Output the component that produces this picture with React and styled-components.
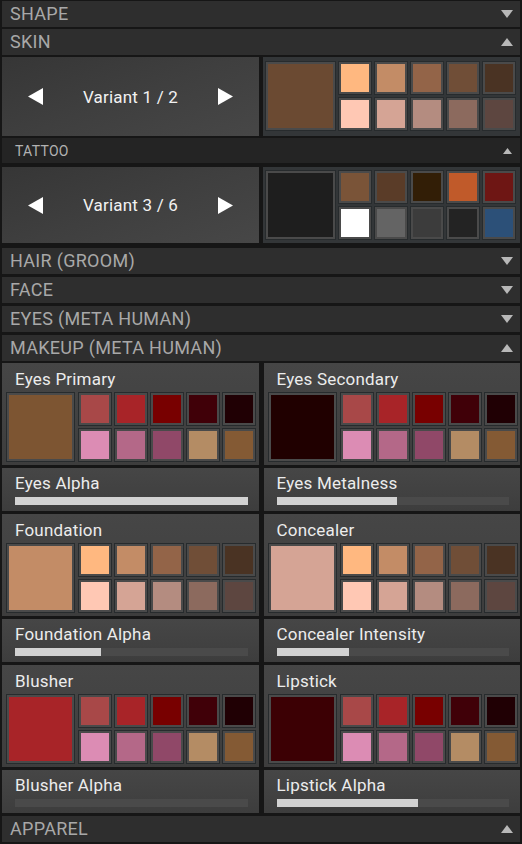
import React from "react";
import styled, { createGlobalStyle } from "styled-components";

const GlobalStyle = createGlobalStyle`
  html, body { margin: 0; padding: 0; background: #161616; }
  body { font-family: Roboto, "Liberation Sans", sans-serif; }
  * { box-sizing: border-box; }
`;

const Page = styled.div`
  width: 522px;
  height: 844px;
  padding: 1px 2px 0 2px;
  display: flex;
  flex-direction: column;
  background: #161616;
  overflow: hidden;
`;

const Group = styled.div`
  display: flex;
  flex-direction: column;
  gap: ${(p) => p.$gap}px;
  margin-top: ${(p) => p.$mt || 0}px;
`;

const HeaderBar = styled.div`
  height: ${(p) => (p.$small ? 25 : 26)}px;
  display: flex;
  align-items: center;
  justify-content: space-between;
  padding: 0 ${(p) => (p.$small ? 8 : 7)}px 0 ${(p) => (p.$small ? 13 : 8)}px;
  background: ${(p) => (p.$small ? "#242424" : "#2e2e2e")};
  color: ${(p) => (p.$small ? "#b2b2b2" : "#a8a8a8")};
  font-size: ${(p) => (p.$small ? 14 : 18)}px;
  letter-spacing: ${(p) => (p.$small ? 0.3 : 0.3)}px;
  line-height: 1;
`;

const Arrow = ({ up, small }) => {
  const w = small ? 9 : 12;
  const h = small ? 6 : 8;
  return (
    <svg width={w} height={h} viewBox={`0 0 ${w} ${h}`}>
      <polygon
        points={up ? `0,${h} ${w},${h} ${w / 2},0` : `0,0 ${w},0 ${w / 2},${h}`}
        fill="#b8b8b8"
      />
    </svg>
  );
};

const Header = ({ title, open, small }) => (
  <HeaderBar $small={small}>
    <span>{title}</span>
    <Arrow up={open} small={small} />
  </HeaderBar>
);

const VariantRow = styled.div`
  display: grid;
  grid-template-columns: minmax(0, 1fr) minmax(0, 1fr);
  gap: 4px;
  height: ${(p) => p.$h}px;
  margin: ${(p) => p.$m || "0"};
`;

const VariantPanel = styled.div`
  display: flex;
  align-items: center;
  justify-content: space-between;
  padding: 0 26px;
  background: linear-gradient(160deg, #363636 0%, #3f3f3f 50%, #474747 100%);
  color: #f2f2f2;
  font-size: 17px;
  letter-spacing: 0.2px;
`;

const Tri = ({ dir }) => (
  <svg width="15" height="17" viewBox="0 0 15 17">
    <polygon points={dir === "left" ? "15,0 15,17 0,8.5" : "0,0 0,17 15,8.5"} fill="#ffffff" />
  </svg>
);

const SwatchPanel = styled.div`
  background: #333638;
  padding: ${(p) => p.$pad};
  display: flex;
`;

const PaletteWrap = styled.div`
  display: flex;
  gap: ${(p) => p.$gap}px;
`;

const Swatch = styled.div`
  flex: none;
  width: ${(p) => p.$w}px;
  height: ${(p) => p.$hh}px;
  background: ${(p) => p.$c};
  border: 2px solid #4a4a4a;
  box-shadow: 0 0 0 1px #272b2d;
`;

const SmallGrid = styled.div`
  display: grid;
  grid-template-columns: repeat(5, 32px);
  grid-template-rows: repeat(2, 32px);
  gap: 4px;
`;

const Palette = ({ main, colors, bigW = 67, gap = 5 }) => (
  <PaletteWrap $gap={gap}>
    <Swatch $w={bigW} $hh={68} $c={main} />
    <SmallGrid>
      {colors.map((c, i) => (
        <Swatch key={i} $w={32} $hh={32} $c={c} />
      ))}
    </SmallGrid>
  </PaletteWrap>
);

const MakeupGrid = styled.div`
  display: grid;
  grid-template-columns: minmax(0, 1fr) minmax(0, 1fr);
  column-gap: 5px;
  row-gap: 3px;
  margin-top: 2px;
`;

const Card = styled.div`
  background: linear-gradient(180deg, #464646 0%, #414141 60%, #3d3d3d 100%);
  height: ${(p) => p.$h}px;
  padding: 4px 3px 0 5px;
  display: flex;
  flex-direction: column;
  min-width: 0;
`;

const CardTitle = styled.div`
  height: ${(p) => p.$h}px;
  display: flex;
  align-items: center;
  padding-left: 8px;
  color: #ececec;
  font-size: 17px;
  letter-spacing: 0.2px;
  margin-bottom: ${(p) => p.$mb}px;
`;

const Track = styled.div`
  margin: 0 8px 0 8px;
  height: 8px;
  background: #4a4a4a;
  display: flex;
`;

const Fill = styled.div`
  height: 100%;
  background: #d2d2d2;
`;

const skin = [
  "#ffb880", "#c38c66", "#936448", "#704e37", "#4a3323",
  "#ffc8b4", "#d5a495", "#b48c80", "#8c6a5e", "#5d4640",
];
const tattoo = [
  "#7a5438", "#5a3c28", "#321e06", "#c05a2a", "#6e1614",
  "#ffffff", "#646464", "#3c3c3c", "#232323", "#2c5078",
];
const makeup = [
  "#a84848", "#a82428", "#780000", "#400008", "#200004",
  "#dc8cb4", "#b46888", "#904868", "#b48c64", "#845a34",
];

const ColorCard = ({ title, main, colors }) => (
  <Card $h={102}>
    <CardTitle $h={24} $mb={2}>{title}</CardTitle>
    <Palette main={main} colors={colors} />
  </Card>
);

const SliderCard = ({ title, value }) => (
  <Card $h={43}>
    <CardTitle $h={22} $mb={3}>{title}</CardTitle>
    <Track>
      <Fill style={{ width: `${value * 100}%` }} />
    </Track>
  </Card>
);

export default function App() {
  return (
    <>
      <GlobalStyle />
      <Page>
        <Group $gap={2}>
          <Header title="SHAPE" />
          <Header title="SKIN" open />
          <VariantRow $h={79}>
            <VariantPanel>
              <Tri dir="left" />
              <span>Variant 1 / 2</span>
              <Tri dir="right" />
            </VariantPanel>
            <SwatchPanel $pad="5px 3px">
              <Palette main="#6b4a32" colors={skin} bigW={69} gap={4} />
            </SwatchPanel>
          </VariantRow>
          <Header title="TATTOO" open small />
        </Group>
        <VariantRow $h={76} $m="4px 0 0 0">
          <VariantPanel>
            <Tri dir="left" />
            <span>Variant 3 / 6</span>
            <Tri dir="right" />
          </VariantPanel>
          <SwatchPanel $pad="4px 3px">
            <Palette main="#1e1e1e" colors={tattoo} bigW={69} gap={4} />
          </SwatchPanel>
        </VariantRow>
        <Group $gap={3} $mt={5}>
          <Header title="HAIR (GROOM)" />
          <Header title="FACE" />
          <Header title="EYES (META HUMAN)" />
          <Header title="MAKEUP (META HUMAN)" open />
        </Group>
        <MakeupGrid>
          <ColorCard title="Eyes Primary" main="#7d5532" colors={makeup} />
          <ColorCard title="Eyes Secondary" main="#200000" colors={makeup} />
          <SliderCard title="Eyes Alpha" value={1} />
          <SliderCard title="Eyes Metalness" value={0.52} />
          <ColorCard title="Foundation" main="#c38c66" colors={skin} />
          <ColorCard title="Concealer" main="#d5a495" colors={skin} />
          <SliderCard title="Foundation Alpha" value={0.37} />
          <SliderCard title="Concealer Intensity" value={0.31} />
          <ColorCard title="Blusher" main="#a82428" colors={makeup} />
          <ColorCard title="Lipstick" main="#3c0004" colors={makeup} />
          <SliderCard title="Blusher Alpha" value={0} />
          <SliderCard title="Lipstick Alpha" value={0.61} />
        </MakeupGrid>
        <Group $gap={0} $mt={3}>
          <Header title="APPAREL" open />
        </Group>
      </Page>
    </>
  );
}
